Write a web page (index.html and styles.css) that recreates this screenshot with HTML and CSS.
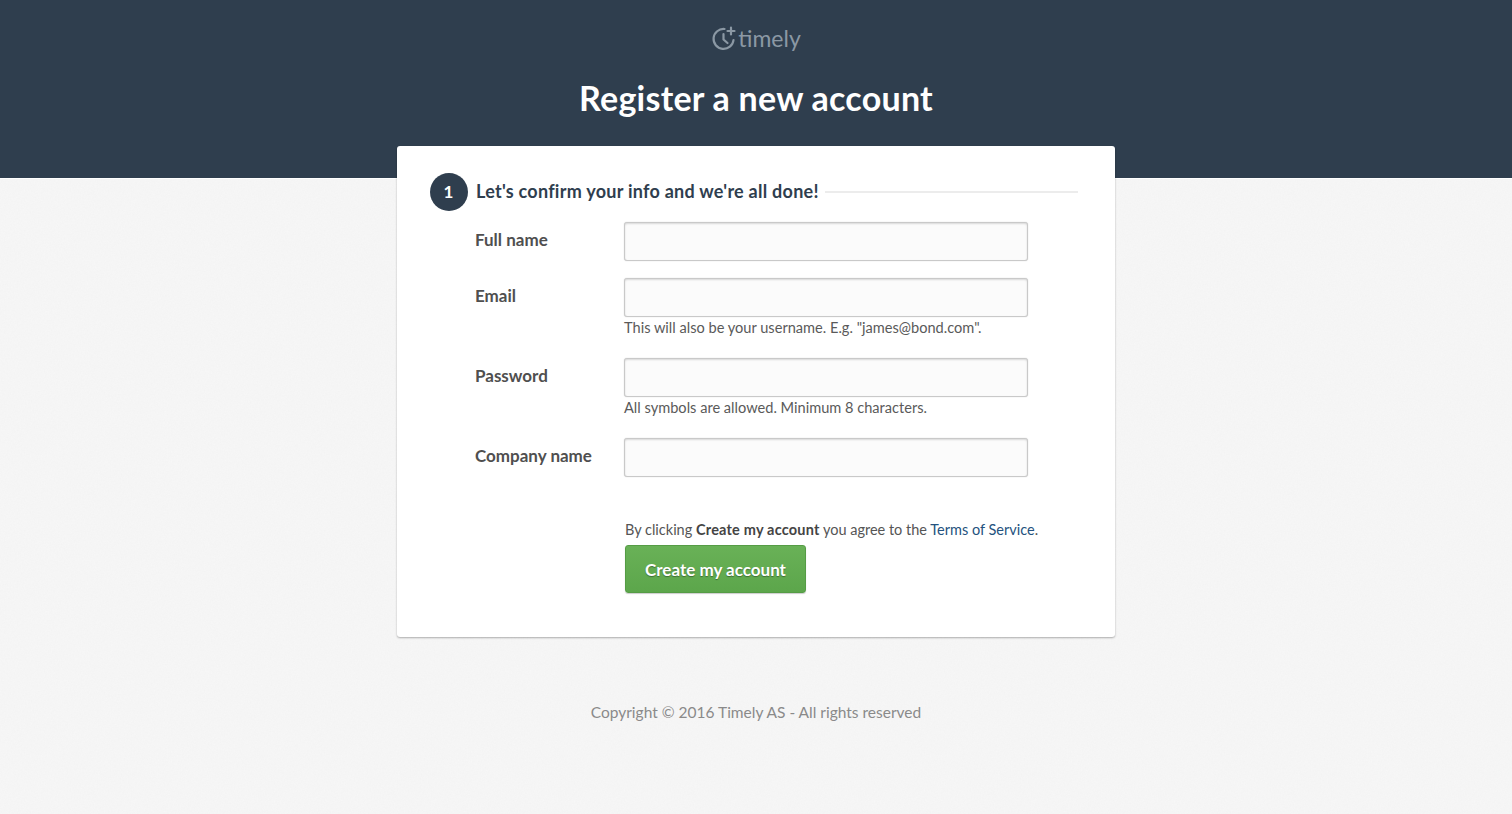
FILE: index.html
```html
<!DOCTYPE html>
<html lang="en">
<head>
    <meta charset="UTF-8">
    <meta name="viewport" content="width=device-width, initial-scale=1.0">
    <title>Register a new account - Timely</title>
    <link rel="stylesheet" href="styles.css">
</head>
<body>
    <header class="top">
        <div class="logo">
            <svg class="logo-icon" width="26" height="26" viewBox="0 0 26 26" fill="none" stroke="#8b98a4" stroke-width="2.2" stroke-linecap="round" stroke-linejoin="round">
                <path d="M13.5 4 A10 10 0 1 0 22.5 15"/>
                <path d="M12.5 9 V14.5 L16.5 18"/>
                <path d="M20 2.5 V9.5 M16.5 6 H23.5"/>
            </svg>
            <span class="logo-text">timely</span>
        </div>
        <h1>Register a new account</h1>
    </header>

    <main class="card">
        <div class="step">
            <div class="step-number">1</div>
            <h2>Let's confirm your info and we're all done!</h2>
            <div class="step-line"></div>
        </div>

        <form class="form">
            <div class="row">
                <label for="name">Full name</label>
                <div class="field"><input type="text" id="name"></div>
            </div>
            <div class="row">
                <label for="email">Email</label>
                <div class="field">
                    <input type="text" id="email">
                    <p class="hint">This will also be your username. E.g. "james@bond.com".</p>
                </div>
            </div>
            <div class="row">
                <label for="password">Password</label>
                <div class="field">
                    <input type="password" id="password">
                    <p class="hint">All symbols are allowed. Minimum 8 characters.</p>
                </div>
            </div>
            <div class="row">
                <label for="company">Company name</label>
                <div class="field"><input type="text" id="company"></div>
            </div>
            <div class="submit">
                <p class="terms">By clicking <strong>Create my account</strong> you agree to the <a href="#">Terms of Service</a>.</p>
                <button type="button">Create my account</button>
            </div>
        </form>
    </main>

    <footer class="copyright">Copyright © 2016 Timely AS - All rights reserved</footer>
</body>
</html>
```

FILE: styles.css
```css
* {
    box-sizing: border-box;
    margin: 0;
    padding: 0;
}

body {
    font-family: 'Lato', 'Open Sans', sans-serif;
    background-color: #f7f7f7;
    background-image: url("data:image/svg+xml,%3Csvg xmlns='http://www.w3.org/2000/svg' width='300' height='300'%3E%3Cfilter id='n'%3E%3CfeTurbulence type='fractalNoise' baseFrequency='0.7' numOctaves='2'/%3E%3CfeColorMatrix values='0 0 0 0 0.5 0 0 0 0 0.5 0 0 0 0 0.5 0 0 0 0.06 0'/%3E%3C/filter%3E%3Crect width='300' height='300' filter='url(%23n)'/%3E%3C/svg%3E");
    color: #4a4a4a;
    height: 814px;
    overflow: hidden;
}

.top {
    background-color: #2f3e4e;
    height: 178px;
    padding-top: 25px;
    text-align: center;
    box-shadow: 0 1px 0 #fff;
}

.logo {
    display: flex;
    justify-content: center;
    align-items: center;
    gap: 1px;
    height: 26px;
}

.logo-text {
    font-size: 23px;
    line-height: 26px;
    color: #8b98a4;
}

.top h1 {
    margin-top: 25px;
    font-size: 34px;
    line-height: 44px;
    font-weight: 700;
    letter-spacing: 0.25px;
    color: #fff;
}

.card {
    width: 718px;
    height: 491px;
    margin: -32px auto 0;
    position: relative;
    background: #fff;
    border-radius: 3px;
    box-shadow: 0 1px 2px rgba(0, 0, 0, 0.3);
    padding: 27px 37px 0 33px;
}

.step {
    display: flex;
    align-items: center;
    height: 38px;
}

.step-number {
    width: 38px;
    height: 38px;
    padding-right: 1px;
    border-radius: 50%;
    background: #2f3e4e;
    color: #fff;
    font-size: 17px;
    font-weight: 700;
    line-height: 38px;
    text-align: center;
    flex-shrink: 0;
}

.step h2 {
    margin-left: 8px;
    font-size: 18px;
    font-weight: 700;
    letter-spacing: 0.26px;
    color: #2f3e4e;
    white-space: nowrap;
    position: relative;
    top: -1px;
}

.step-line {
    flex: 1;
    height: 2px;
    margin-left: 6px;
    background: #ececec;
}

.form {
    margin-top: 11px;
    padding-left: 45px;
}

.row {
    display: flex;
    margin-bottom: 17px;
}

.row label {
    width: 149px;
    padding-top: 8px;
    font-size: 17px;
    line-height: 20px;
    font-weight: 700;
    color: #4f4f4f;
}

.field {
    width: 404px;
}

.field input {
    display: block;
    width: 100%;
    height: 39px;
    background: #fbfbfb;
    border: 1px solid #c9c9c9;
    border-radius: 3px;
    box-shadow: inset 0 1px 2px rgba(0, 0, 0, 0.14), 0 0 1px rgba(0, 0, 0, 0.25);
}

.hint {
    margin-top: 1px;
    margin-bottom: 3px;
    font-size: 14.6px;
    line-height: 20px;
    color: #5a5a5a;
}

.submit {
    margin-top: 43px;
    margin-left: 150px;
}

.terms {
    font-size: 14.5px;
    line-height: 20px;
    color: #555;
    white-space: nowrap;
}

.terms strong {
    color: #444;
    letter-spacing: 0.2px;
}

.terms a {
    color: #24527e;
    text-decoration: none;
}

.submit button {
    display: block;
    margin-top: 5px;
    width: 181px;
    height: 48px;
    background: linear-gradient(#69b157, #5ca64b);
    border: 1px solid #559c45;
    border-radius: 3px;
    color: #fff;
    font-family: inherit;
    font-size: 17px;
    font-weight: 700;
    text-shadow: 0 1px 1px rgba(0, 0, 0, 0.35);
    box-shadow: 0 1px 1px rgba(0, 0, 0, 0.2);
}

.copyright {
    margin-top: 65px;
    text-align: center;
    font-size: 15.5px;
    line-height: 20px;
    color: #8a8a8a;
}
```
